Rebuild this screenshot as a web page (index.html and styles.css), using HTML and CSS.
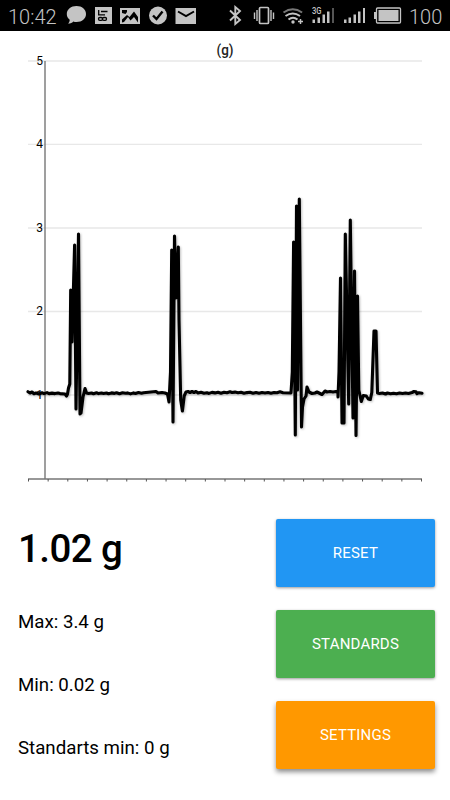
FILE: index.html
```html
<!DOCTYPE html>
<html lang="en">
<head>
    <meta charset="UTF-8">
    <meta name="viewport" content="width=device-width, initial-scale=1.0">
    <title>Accelerometer</title>
    <link rel="stylesheet" href="styles.css">
</head>
<body>
    <header class="status-bar">
        <span class="clock">10:42</span>
        <svg class="status-icons" viewBox="64 0 136 31" width="136" height="31">
            <g fill="#c4c4c4">
                <path d="M76.500 6c5.500 0 9.500 3.500 9.500 8s-4 8-9.500 8c-1.200 0-2.200-.1-3.200-.5-1.300 1.500-3 2.200-5.300 2.100 1.300-1.100 1.700-2.500 1.700-3.900-1.900-1.400-2.900-3.300-2.900-5.700 0-4.500 4.200-8 9.700-8z"/>
                <path d="M95 7h17v17H95z"/>
                <path d="M120 8h20v16h-20z"/>
                <circle cx="158" cy="15.500" r="9"/>
                <path d="M175.500 8H196v16h-20.500z"/>
            </g>
            <g fill="none" stroke="#000" stroke-width="1.300">
                <path d="M98.700 10v5M101 11.500h6.500M98 14.800h7"/>
                <rect x="98.500" y="17.500" width="4" height="2.800" rx="1.300"/>
                <rect x="102.500" y="17.500" width="4" height="2.800" rx="1.300"/>
                <path d="M153 15.500l3.500 3.500 6-7.500" stroke-width="2.400"/>
                <path d="M178 11.500l8 4.500 8-4.500" stroke-width="2"/>
            </g>
            <path d="M122 22.500v-3l5-4.500 2.500 2 4.500-5.500 4 5.500v5.500l-4-5.500-3.500 3.500-2.500-3.500-4 5z" fill="#000"/>
            <path d="M122 10h5v2l-1.500 2-3.500-1z" fill="#000"/>
        </svg>
        <svg class="status-icons status-icons-right" viewBox="224 0 180 31" width="180" height="31">
            <path d="M230 10.500l10 9.500-4.700 4V7l4.700 4-10 9.500" fill="none" stroke="#c4c4c4" stroke-width="1.900"/>
            <g fill="none" stroke="#c4c4c4">
                <rect x="259.500" y="7.500" width="9" height="16" rx="1" stroke-width="1.700"/>
                <path d="M257 10v11M254.500 12.500v6.500M271 10v11M273.500 12.500v6.500" stroke-width="1.400"/>
                <path d="M283.500 12.500q9.300-6.500 18.600 0" stroke="#777" stroke-width="2"/>
                <path d="M285.500 16q7.300-5 14.500 0M288.500 19.500q4.500-3.500 9 0" stroke-width="2"/>
                <path d="M300.500 19v5M298 21.500h5" stroke-width="1.500"/>
            </g>
            <g fill="#c4c4c4">
                <circle cx="293" cy="22" r="1.700"/>
                <path d="M312.500 19.500h2.500V23h-2.500zM317.500 17.500h2.500V23h-2.500zM322.500 14.500h2.500V23h-2.500zM327 11.500h2.500V23H327z"/>
                <path d="M332 8h2v15h-2z" fill="#555"/>
                <path d="M344 19.500h2.500V23H344zM348.500 17.500h2.500V23h-2.500zM353.500 14.500h2.500V23h-2.500zM358 11.500h2.500V23H358zM363 8h2v15h-2z"/>
                <path d="M378.500 10h20v11h-20z"/>
                <path d="M374 12h2v7h-2z"/>
            </g>
            <rect x="376.500" y="8" width="24" height="15" rx="1" fill="none" stroke="#c4c4c4" stroke-width="1.300"/>
            <text class="network" x="312" y="13.500" textLength="9.500" lengthAdjust="spacingAndGlyphs">3G</text>
        </svg>
        <span class="battery-level">100</span>
    </header>

    <main>
        <svg class="chart" viewBox="0 31 450 459" width="450" height="459">
            <text class="chart-title" x="225" y="55" textLength="17" lengthAdjust="spacingAndGlyphs">(g)</text>
            <path class="grid" d="M28 61H422M28 144.300H422M28 228H422M28 311.500H422M28 395H422"/>
            <g class="labels">
                <text x="43" y="65">5</text>
                <text x="43" y="148">4</text>
                <text x="43" y="231.500">3</text>
                <text x="43" y="315">2</text>
                <text x="43" y="398.500">1</text>
            </g>
            <path class="axis" d="M45 61V479M28 479H422"/>
            <path class="ticks" id="ticks"/>
            <path class="signal" d="M28 391.700l2 1.300 2-1 2 1.700 2-.7 3 1 3-1.200 2 .8 3-1 2 1 3-.5 3 .5 3-.6 2 .6L65 394l1.500 2 1-2 1-6L69.800 384 70.700 290l1.300 52 2.600-97L76 409l2.500-175L80 414l1-1 2-16 2-8.500 1.500 4.500 2 .5 3-.5 2 .8 3-1 2 .8 3-.6 2 .5 3-.5 2 .7 3-.8 3 .5 2-.7 3 1.100 3-1 3 .5 2-.4 3 1 3-1 2 .6 3-1 3 .8 2-.5L156 391.500l2 1.500 4-.5 3 .5L167.500 394 169 402 170.500 372 171.700 250 173 422l1.500-186 1.500 62 2.300-51 .7 73 1.700 80 1.700 11 1.800-15 1.800-4 2-.5 2 1 2-1 2 1 2-1 2 1.500 3-.7 3 1 3-.5 2 .6 3-1 3 .5 3-.7 3 1 3-1 3 .6 3-1 2 .7 3-.4 3 .6 3-.4 3 1 3-.7 3-.3 3 1 3-.8 3 .8 3-.8 3 .5 3-.5 3 .8 3-.8 3 .3 3-1 3 1L291 393 292.300 372 293.600 242 295.300 435l1.200-229 1 184 1.800-191 2.200 228 1-20 1.500-8 2-3 1-9 2 5 3 1.500 3-.5 2-1 2 1 3 1.500 3-3.500 2 1 3-.5 3 .5 3-.5 2 1L338 397 339 372 340.500 278 342 423h2l1.300-189L348.700 404l1.600-184L353 418l1.500-147L356 435.500l1.500-139.500 1.300 94 2.500 11.500 2-6 3 .5 2 3 2 .5 1.500-7 2.200-61.500h2l1.500 62 2 .5 3-.5 3 1 2-1 3 .7 3-.5 3 .5 3-.7 3 .5 3-.5 3 .5L412 392.500l2-1 2 .2 1 2 2-1L422 393.300"/>
        </svg>

        <section class="panel">
            <div class="readings">
                <div class="current">1.02 g</div>
                <div class="reading">Max: 3.4 g</div>
                <div class="reading">Min: 0.02 g</div>
                <div class="reading">Standarts min: 0 g</div>
            </div>
            <div class="buttons">
                <button class="btn btn-reset">RESET</button>
                <button class="btn btn-standards">STANDARDS</button>
                <button class="btn btn-settings">SETTINGS</button>
            </div>
        </section>
    </main>

    <script>
        // tick marks on the time axis
        var d = '';
        for (var i = 0; i <= 20; i++) {
            d += 'M' + (28.5 + i * 19.65).toFixed(2) + ' 479v2.500';
        }
        document.getElementById('ticks').setAttribute('d', d);
    </script>
</body>
</html>
```

FILE: styles.css
```css
body {
    margin: 0;
    height: 800px;
    overflow: hidden;
    background-color: #fff;
    color: #000;
    font-family: Roboto, sans-serif;
}

.status-bar {
    display: flex;
    align-items: center;
    height: 31px;
    padding-left: 8px;
    background-color: #000;
    color: #c4c4c4;
    font-size: 20px;
    font-weight: 300;
    line-height: 31px;
}

.clock {
    width: 56px;
    padding-top: 3px;
}

.status-icons-right {
    margin-left: 24px;
}

.battery-level {
    margin-left: 5px;
    padding-top: 3px;
}

.network {
    fill: #c4c4c4;
    font-size: 9px;
    font-weight: 500;
}

.chart {
    display: block;
}

.chart-title {
    font-size: 14px;
    font-weight: 500;
    text-anchor: middle;
    fill: #222;
}

.labels {
    font-size: 12px;
    text-anchor: end;
}

.grid {
    stroke: #e8e8e8;
    stroke-width: 1.3;
}

.axis {
    fill: none;
    stroke: #777;
    stroke-width: 1.4;
}

.ticks {
    stroke: #555;
    stroke-width: 1;
}

.signal {
    fill: none;
    stroke: #000;
    stroke-width: 3.1;
    stroke-linejoin: round;
    stroke-linecap: round;
    filter: drop-shadow(1px 1px 1px rgba(0, 0, 0, 0.25));
}

.panel {
    display: flex;
    justify-content: space-between;
    padding: 29px 15px 0 18px;
}

.current {
    height: 84px;
    font-size: 38.5px;
    font-weight: 500;
    letter-spacing: -0.6px;
    line-height: 60px;
}

.reading {
    height: 63px;
    font-size: 18.7px;
    line-height: 39px;
}

.buttons {
    display: flex;
    flex-direction: column;
    gap: 23px;
    width: 159px;
}

.btn {
    height: 68px;
    padding: 0;
    border: none;
    border-radius: 2px;
    color: #fff;
    font-family: inherit;
    font-size: 15px;
    letter-spacing: 0.2px;
    box-shadow: 0 1px 3px rgba(0, 0, 0, 0.4);
}

.btn-reset {
    background-color: #2196f3;
}

.btn-standards {
    background-color: #4caf50;
}

.btn-settings {
    background-color: #ff9800;
    box-shadow: 0 3px 5px rgba(0, 0, 0, 0.45);
}
```
